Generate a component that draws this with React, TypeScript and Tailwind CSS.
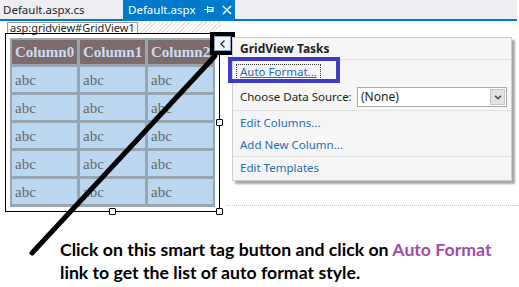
import React from "react"

const ui = { fontFamily: '"Noto Sans", "Open Sans", sans-serif' }
const serif = { fontFamily: '"Liberation Serif", "Times New Roman", serif' }

const columns = ["Column0", "Column1", "Column2"]
const rows = [0, 1, 2, 3, 4]

function Handle({ className }: { className: string }) {
  return <div className={"absolute w-[7px] h-[7px] bg-white border border-black rounded-[1px] " + className} />
}

export default function App() {
  return (
    <div className="relative w-[519px] h-[287px] bg-white overflow-hidden" style={ui}>
      {/* tab strip */}
      <div className="flex w-[517px] h-[21px] bg-[#eeeef2] border-b-2 border-[#007acc]">
        <div className="w-[123px] pl-[3px] text-[11.5px] leading-[19px] text-[#1e1e1e]">Default.aspx.cs</div>
        <div className="flex items-center w-[112px] bg-[#007acc] pl-[5px] text-[11.5px] leading-[19px] text-white">
          <span>Default.aspx</span>
          <svg className="ml-[9px]" width="10" height="9" viewBox="0 0 10 9">
            <path d="M0 4.5h3M3.5 1v7M3.5 2.5h5.5v4H3.5M3.5 5h5.5" stroke="white" strokeWidth="1.2" fill="none" />
          </svg>
          <svg className="ml-[8px]" width="10" height="10" viewBox="0 0 10 10">
            <path d="M1 1l8 8M9 1l-8 8" stroke="white" strokeWidth="1.5" />
          </svg>
        </div>
      </div>

      {/* design surface */}
      <div className="pl-[5px]">
        <div className="flex mt-[1px] ml-[2px] h-[12px]">
          <div className="border border-[#9a9a9a] bg-white px-[2px] text-[11px] leading-[10px] text-[#222]">
            asp:gridview#GridView1
          </div>
          <div className="w-[83px] h-[12px] bg-[image:repeating-linear-gradient(135deg,#ecdede_0px,#ecdede_1px,#ffffff_1px,#ffffff_3px)]" />
        </div>

        <div className="relative w-[215px] -mt-[1px] border border-black px-[4px] pt-[4px] pb-[4px]">
          <div className="grid grid-cols-[65px_65px_65px] gap-[3px] bg-[#98a6b1] pt-[2px] pb-[3px] px-[2px]" style={serif}>
            {columns.map((c) => (
              <div key={c} className="h-[24px] bg-[#7e6b6b] flex items-center pl-[3px] text-[15px] font-bold text-[#cadcf1]">
                {c}
              </div>
            ))}
            {rows.map((r) =>
              columns.map((c) => (
                <div key={c + r} className="h-[25px] bg-[#bad7ef] flex items-center pl-[3px] pt-[2px] text-[15px] text-[#6a6a6a]">
                  abc
                </div>
              ))
            )}
          </div>
          <Handle className="left-[103px] -bottom-[4px]" />
          <Handle className="-right-[4px] -bottom-[4px]" />
          <Handle className="-right-[4px] top-[85px]" />
        </div>

        <div className="mt-[26px] ml-[55px] text-[17.7px] leading-[23px] font-bold text-black" style={{ fontFamily: 'Lato, "Open Sans", sans-serif' }}>
          <div>
            Click on this smart tag button and click on <span className="text-[#a24ca8]">Auto Format</span>
          </div>
          <div>link to get the list of auto format style.</div>
        </div>
      </div>

      {/* dotted guide to the right of the control */}
      <div className="absolute left-[226px] top-[205px] w-[293px] border-t border-dotted border-[#c8c8c8]" />

      {/* pointer line */}
      <svg className="absolute inset-0 pointer-events-none" width="519" height="287">
        <line x1="215" y1="56" x2="32" y2="253" stroke="black" strokeWidth="5" strokeLinecap="round" />
      </svg>

      {/* smart tag button */}
      <div className="absolute left-[210px] top-[32px] w-[25px] h-[23px] bg-black p-[4px]">
        <div className="w-full h-full bg-[#eef3fa] border border-[#8aa0c0] flex items-center justify-center">
          <svg width="6" height="8" viewBox="0 0 6 8">
            <path d="M4.5 0.5L1 4l3.5 3.5" stroke="#222" strokeWidth="1.2" fill="none" />
          </svg>
        </div>
      </div>

      {/* tasks panel */}
      <div className="absolute left-[232px] top-[37px] w-[280px] h-[144px] bg-[#f6f6f6] border border-[#cfcfcf] shadow-[3px_3px_2px_rgba(0,0,0,0.35)] text-[11.5px] text-[#1e1e1e]">
        <div className="h-[21px] pl-[7px] flex items-center font-bold text-[12px]">GridView Tasks</div>
        <div className="border-t border-[#e2e2e2] h-[25px] pl-[3px] flex items-center">
          <span className="border border-dotted border-[#333] px-[3px] leading-[14px] text-[#1f6cb8] underline">Auto Format...</span>
        </div>
        <div className="h-[26px] pl-[7px] flex items-center">
          <span className="w-[117px]">Choose Data Source:</span>
          <div className="flex items-center w-[150px] h-[20px] bg-white border border-[#a9a9a9] pl-[3px] text-[12px]">
            <span className="flex-1">(None)</span>
            <div className="w-[15px] h-[16px] mr-[1px] bg-[#e3e3e3] border border-[#c6c6c6] flex items-center justify-center">
              <svg width="8" height="5" viewBox="0 0 8 5">
                <path d="M1 0.8l3 3 3-3" stroke="#444" strokeWidth="1.5" fill="none" />
              </svg>
            </div>
          </div>
        </div>
        <div className="border-t border-[#e2e2e2] h-[24px] pl-[7px] flex items-center text-[#1f6cb8]">Edit Columns...</div>
        <div className="h-[22px] pl-[7px] flex items-center text-[#1f6cb8]">Add New Column...</div>
        <div className="border-t border-[#e2e2e2] h-[22px] pl-[7px] flex items-center text-[#1f6cb8]">Edit Templates</div>
      </div>

      {/* highlight around Auto Format */}
      <div className="absolute left-[228px] top-[57px] w-[112px] h-[26px] border-4 border-[#3c3cc6]" />
    </div>
  )
}
